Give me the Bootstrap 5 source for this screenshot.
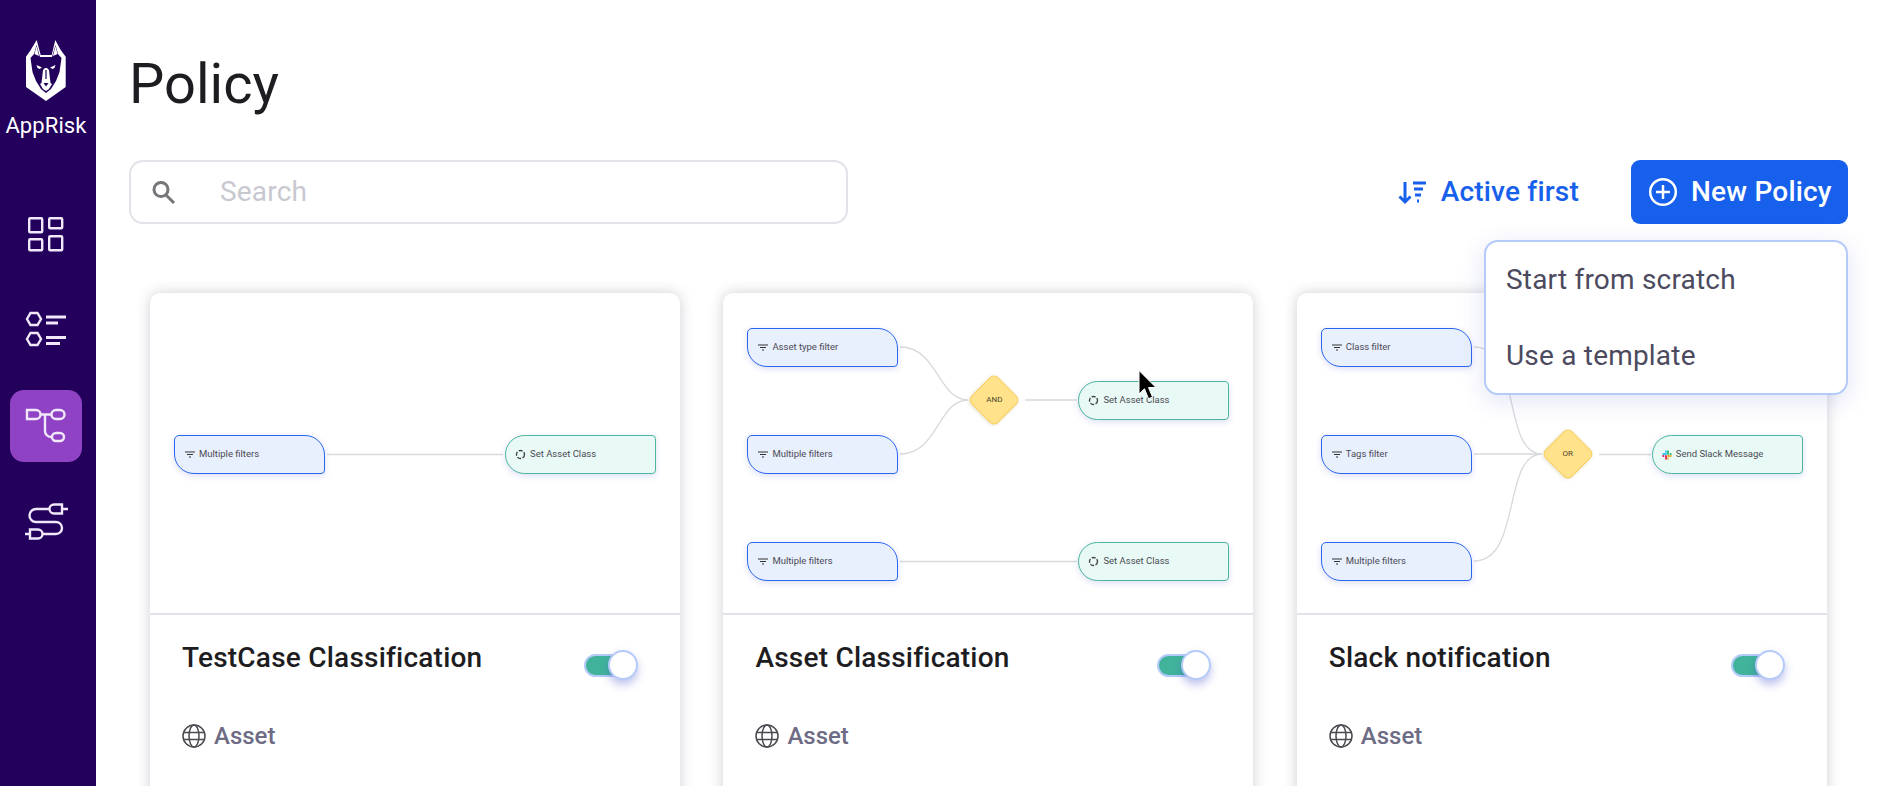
<!DOCTYPE html>
<html lang="en">
<head>
<meta charset="utf-8">
<title>Policy</title>
<link href="https://cdn.jsdelivr.net/npm/bootstrap@5.3.0/dist/css/bootstrap.min.css" rel="stylesheet">
<style>
html,body{height:786px;overflow:hidden}
body{font-family:Roboto,"Liberation Sans",sans-serif;color:#1d1d21;background:#fff}
.page-shell{height:786px;overflow:hidden;position:relative}
.side-rail{width:96px;height:786px;background:#23005c;flex:none;padding-right:4px}
.brand-name{font-size:22px;line-height:28px;margin-top:11px;color:#fff;letter-spacing:.1px}
.brand-block{padding-top:39px;height:198px}
.rail-tile{width:72px;height:72px;border-radius:14px;display:flex;align-items:center;justify-content:center}
.rail-tile svg{width:72px;height:72px;fill:none;stroke:#f1e8fa;stroke-width:2.4}
.rail-tile.is-on{background:#8f43c4}
.rail-stack{gap:24px}
.main-area{flex:1;min-width:0;padding:0 40px 0 33px;position:relative}
.page-title{font-size:56px;font-weight:400;line-height:66px;margin:51px 0 0;color:#1d1d21}
.tool-row{margin-top:43px;height:64px}
.search-box{width:719px;height:64px;border:2px solid #e2e2e8;border-radius:14px;padding-left:19px}
.search-box input{border:0;outline:0;font-size:28px;letter-spacing:.2px;margin-left:42px;flex:1;color:#333;background:transparent}
.search-box input::placeholder{color:#c8c8d0;opacity:1}
.sort-link{font-size:28px;letter-spacing:.2px;font-weight:500;color:#1660ec;text-decoration:none;margin-right:52px;gap:13px}
.add-btn{width:217px;height:64px;background:#1660ec;border:0;border-radius:9px;color:#fff;font-size:28px;letter-spacing:.2px;font-weight:500;gap:13px;padding:0 0 0 17px;white-space:nowrap}
.add-btn:hover{background:#1660ec;color:#fff}
.pop-menu{position:absolute;right:40px;top:240px;width:364px;height:155px;background:#fff;border:2px solid #b4caf8;border-radius:14px;box-shadow:0 6px 24px rgba(70,80,200,.16);padding:0;z-index:5;display:block}
.pop-menu .dropdown-item{font-size:28px;letter-spacing:.2px;color:#4c4a5e;padding:0 0 0 20px;height:76px;display:flex;align-items:center;background:none}
.card-row{margin-top:69px;margin-left:21px;gap:43.4px}
.flow-card{width:530px;height:520px;border:0;border-radius:10px;box-shadow:0 0 14px rgba(40,40,70,.22);flex:none;overflow:hidden}
.flow-area{height:322px;position:relative;border-bottom:2px solid #e2e2e8}
.flow-lines{position:absolute;left:0;top:0;width:530px;height:322px;fill:none;stroke:#d9d9dd;stroke-width:1.3}
.flow-node{position:absolute;width:151px;height:39px;font-size:9.5px;color:#4b4b55;display:flex;align-items:center;box-shadow:0 2px 6px rgba(60,80,200,.18);white-space:nowrap}
.node-filter{left:24px;background:#e8effd;border:1.6px solid #2a66ee;border-radius:5px 20px 4px 20px;padding-left:10px;gap:4px}
.node-action{left:355px;background:#e9faf6;border:1.6px solid #4cb59e;border-radius:20px 4px 4px 20px;padding-left:9px;gap:4px}
.row-a{top:35px}.row-b{top:142px}.row-c{top:249px}.row-mid{top:88px}
.flow-node svg{flex:none}
.gate{position:absolute;left:252px;width:38px;height:38px;background:#ffe28a;border:1.5px solid #f8cf62;border-radius:6px;transform:rotate(45deg);box-shadow:0 1px 4px rgba(120,100,40,.2)}
.gate-label{position:absolute;left:251px;width:40px;height:38px;font-size:8px;color:#4c4630;display:flex;align-items:center;justify-content:center}
.gate-top,.gate-top-label{top:88px}
.gate-mid,.gate-mid-label{top:142px}
.info-pane{padding:27px 42px 30px 32px}
.flow-name{font-size:28px;font-weight:500;line-height:32px;margin:0;color:#1d1d21;letter-spacing:.22px}
.switch-wrap{position:relative;width:54px;height:30px;margin:8px 0 0;flex:none}
.switch-track{position:absolute;left:0;top:4px;width:44px;height:23px;border-radius:12px;background:#40b39a;border:2px solid #b4caf8}
.switch-knob{position:absolute;right:0;top:0;width:30px;height:30px;border-radius:50%;background:#fff;border:2px solid #b4caf8;box-shadow:0 5px 9px rgba(70,80,200,.35)}
.kind-row{margin-top:42px;gap:8px;font-size:24px;font-weight:500;color:#6e6b85;line-height:28px}
.mouse-arrow{position:absolute;left:1128px;top:367px;width:30px;height:35px;z-index:4;fill:#000;stroke:#fff;stroke-width:1}
</style>
</head>
<body>
<div class="page-shell d-flex">
  <nav class="side-rail d-flex flex-column align-items-center">
    <div class="brand-block text-center">
      <svg class="d-block mx-auto" width="42" height="62" viewBox="0 0 42 62">
        <path fill="#fff" d="M1 17.700 L5.700 11 L11.700 1 L15.700 16 H26.700 L30.300 1 L35.700 11 L40.700 17.700 V48 L21 62 L1 48Z"/>
        <path fill="#23005c" d="M11.500 6 L9 15 L5.500 19 L7.500 33 L11 42 L16 50 L21 54 L26 50 L31 42 L34.500 33 L36.500 19 L33 15 L30.500 6 L27 18 H15Z"/>
        <path fill="#fff" d="M11.500 7 L14 17 L9.500 15Z M30.500 7 L28 17 L32.500 15Z"/>
        <path fill="#fff" d="M11.500 26 L17 28.500 L14.500 30 L12.500 29Z M30.500 26 L25 28.500 L27.500 30 L29.500 29Z"/>
        <path fill="#fff" d="M18 31 L20 29 H22 L24 31 L25.500 44 L27 45 L24 50 L21 52 L18 50 L15 45 L16.500 44Z"/>
        <path fill="#23005c" d="M20.400 31 H21.600 V40 H20.400Z M18.500 44 H23.500 L21 47.500Z"/>
      </svg>
      <div class="brand-name">AppRisk</div>
    </div>
    <div class="rail-stack d-flex flex-column">
      <a class="rail-tile"><svg viewBox="0 0 72 72"><rect x="19.200" y="20.200" width="13" height="14" rx="1"/><rect x="39.200" y="20.200" width="13" height="10" rx="1"/><rect x="19.200" y="41.200" width="13" height="11" rx="1"/><rect x="39.200" y="38.200" width="13" height="14" rx="1"/></svg></a>
      <a class="rail-tile"><svg viewBox="0 0 72 72"><path d="M17 25l3.500-6h7l3.500 6-3.500 6h-7zM17 45l3.500-6h7l3.500 6-3.500 6h-7z"/><path stroke-width="3" d="M36 23H56M36 29H48M36 43.500H56M36 49.500H50"/></svg></a>
      <a class="rail-tile is-on"><svg viewBox="0 0 72 72"><path d="M17 20H26a4.500 4.500 0 0 1 0 9H17zM46 20H50a4.500 4.500 0 0 1 0 9H46a4.500 4.500 0 0 1 0-9zM46 43H50a4 4 0 0 1 0 8H46a4 4 0 0 1 0-8zM31 24.500H42M35 24.500V41a6 6 0 0 0 6 6"/></svg></a>
      <a class="rail-tile"><svg viewBox="0 0 72 72"><path d="M39 23H26a6.500 6.500 0 0 0 0 13H46a6 6 0 0 1 0 12H33M52 18.500H44a4.500 4.500 0 0 0 0 9H52zM52 23H58M20 43.500H28a4.500 4.500 0 0 1 0 9H20zM20 48H15"/></svg></a>
    </div>
  </nav>
  <main class="main-area">
    <h1 class="page-title">Policy</h1>
    <div class="tool-row d-flex align-items-center">
      <label class="search-box d-flex align-items-center">
        <svg width="26" height="26" viewBox="0 0 26 26" fill="none" stroke="#75757a" stroke-width="3"><circle cx="11" cy="10.500" r="7"/><path d="M16 16l8 8"/></svg>
        <input type="text" placeholder="Search">
      </label>
      <a class="sort-link ms-auto d-flex align-items-center" href="#">
        <svg width="30" height="26" viewBox="0 0 30 26" fill="none" stroke="#1660ec" stroke-width="3"><path d="M7 3V23M1.500 17.500L7 23l5.500-5.500M15 4H28M16 10H25M17 16H23M19 22H21"/></svg>
        Active first
      </a>
      <button class="btn add-btn d-flex align-items-center" type="button">
        <svg width="30" height="30" viewBox="0 0 30 30" fill="none" stroke="#fff" stroke-width="2.500"><circle cx="15" cy="15" r="12.800"/><path d="M15 8V22M8 15H22"/></svg>
        New Policy
      </button>
    </div>
    <ul class="dropdown-menu pop-menu list-unstyled">
      <li><a class="dropdown-item" href="#">Start from scratch</a></li>
      <li><a class="dropdown-item" href="#">Use a template</a></li>
    </ul>
    <div class="card-row d-flex">
      <section class="card flow-card">
        <div class="flow-area">
          <svg class="flow-lines" viewBox="0 0 530 322"><path d="M177 161.500H353"/></svg>
          <div class="flow-node node-filter row-b"><svg width="10" height="7" viewBox="0 0 10 7" fill="none" stroke="#333" stroke-width="1"><path d="M0 1H10M2 3.500H8M4 6H6"/></svg>Multiple filters</div>
          <div class="flow-node node-action row-b"><svg width="11" height="11" viewBox="0 0 11 11" fill="none" stroke="#444" stroke-width="1.400"><circle cx="5.500" cy="5.500" r="4" stroke-dasharray="4 1.500"/></svg>Set Asset Class</div>
        </div>
        <div class="info-pane">
          <div class="d-flex justify-content-between"><h2 class="flow-name">TestCase Classification</h2><div class="switch-wrap"><span class="switch-track"></span><span class="switch-knob"></span></div></div>
          <div class="kind-row d-flex align-items-center"><svg width="24" height="24" viewBox="0 0 24 24" fill="none" stroke="#4a4a50" stroke-width="1.500"><circle cx="12" cy="12" r="11"/><ellipse cx="12" cy="12" rx="5" ry="11"/><path d="M1.500 8.500H22.500M1.500 15.500H22.500"/></svg>Asset</div>
        </div>
      </section>
      <section class="card flow-card">
        <div class="flow-area">
          <svg class="flow-lines" viewBox="0 0 530 322"><path d="M177 54C215 54 215 107 245 107M177 161C215 161 215 107 245 107M302 107H354M177 268.500H354"/></svg>
          <div class="flow-node node-filter row-a"><svg width="10" height="7" viewBox="0 0 10 7" fill="none" stroke="#333" stroke-width="1"><path d="M0 1H10M2 3.500H8M4 6H6"/></svg>Asset type filter</div>
          <div class="flow-node node-filter row-b"><svg width="10" height="7" viewBox="0 0 10 7" fill="none" stroke="#333" stroke-width="1"><path d="M0 1H10M2 3.500H8M4 6H6"/></svg>Multiple filters</div>
          <div class="flow-node node-filter row-c"><svg width="10" height="7" viewBox="0 0 10 7" fill="none" stroke="#333" stroke-width="1"><path d="M0 1H10M2 3.500H8M4 6H6"/></svg>Multiple filters</div>
          <div class="gate gate-top"></div><div class="gate-label gate-top-label">AND</div>
          <div class="flow-node node-action row-mid"><svg width="11" height="11" viewBox="0 0 11 11" fill="none" stroke="#444" stroke-width="1.400"><circle cx="5.500" cy="5.500" r="4" stroke-dasharray="4 1.500"/></svg>Set Asset Class</div>
          <div class="flow-node node-action row-c"><svg width="11" height="11" viewBox="0 0 11 11" fill="none" stroke="#444" stroke-width="1.400"><circle cx="5.500" cy="5.500" r="4" stroke-dasharray="4 1.500"/></svg>Set Asset Class</div>
        </div>
        <div class="info-pane">
          <div class="d-flex justify-content-between"><h2 class="flow-name">Asset Classification</h2><div class="switch-wrap"><span class="switch-track"></span><span class="switch-knob"></span></div></div>
          <div class="kind-row d-flex align-items-center"><svg width="24" height="24" viewBox="0 0 24 24" fill="none" stroke="#4a4a50" stroke-width="1.500"><circle cx="12" cy="12" r="11"/><ellipse cx="12" cy="12" rx="5" ry="11"/><path d="M1.500 8.500H22.500M1.500 15.500H22.500"/></svg>Asset</div>
        </div>
      </section>
      <section class="card flow-card">
        <div class="flow-area">
          <svg class="flow-lines" viewBox="0 0 530 322"><path d="M177 54C225 54 205 161 245 161M177 161H245M177 268C225 268 205 161 245 161M302 161.500H354"/></svg>
          <div class="flow-node node-filter row-a"><svg width="10" height="7" viewBox="0 0 10 7" fill="none" stroke="#333" stroke-width="1"><path d="M0 1H10M2 3.500H8M4 6H6"/></svg>Class filter</div>
          <div class="flow-node node-filter row-b"><svg width="10" height="7" viewBox="0 0 10 7" fill="none" stroke="#333" stroke-width="1"><path d="M0 1H10M2 3.500H8M4 6H6"/></svg>Tags filter</div>
          <div class="flow-node node-filter row-c"><svg width="10" height="7" viewBox="0 0 10 7" fill="none" stroke="#333" stroke-width="1"><path d="M0 1H10M2 3.500H8M4 6H6"/></svg>Multiple filters</div>
          <div class="gate gate-mid"></div><div class="gate-label gate-mid-label">OR</div>
          <div class="flow-node node-action row-b"><svg width="10" height="10" viewBox="0 0 10 10" fill="none" stroke-width="1.800" stroke-linecap="round"><path stroke="#36c5f0" d="M1.200 4H4M4 1.200V2"/><path stroke="#2eb67d" d="M6 1.200V4M8.800 4H8.500"/><path stroke="#ecb22e" d="M6 6H8.800M6 8.800V8.500"/><path stroke="#e01e5a" d="M4 6V8.800M1.200 6H1.500"/></svg>Send Slack Message</div>
        </div>
        <div class="info-pane">
          <div class="d-flex justify-content-between"><h2 class="flow-name">Slack notification</h2><div class="switch-wrap"><span class="switch-track"></span><span class="switch-knob"></span></div></div>
          <div class="kind-row d-flex align-items-center"><svg width="24" height="24" viewBox="0 0 24 24" fill="none" stroke="#4a4a50" stroke-width="1.500"><circle cx="12" cy="12" r="11"/><ellipse cx="12" cy="12" rx="5" ry="11"/><path d="M1.500 8.500H22.500M1.500 15.500H22.500"/></svg>Asset</div>
        </div>
      </section>
    </div>
  </main>
  <svg class="mouse-arrow" viewBox="0 0 30 35"><path d="M11 3.500V27l5.500-5.200 4 10 4-1.800-4-9.500H28z"/></svg>
</div>
<script src="https://cdn.jsdelivr.net/npm/bootstrap@5.3.0/dist/js/bootstrap.bundle.min.js"></script>
</body>
</html>
